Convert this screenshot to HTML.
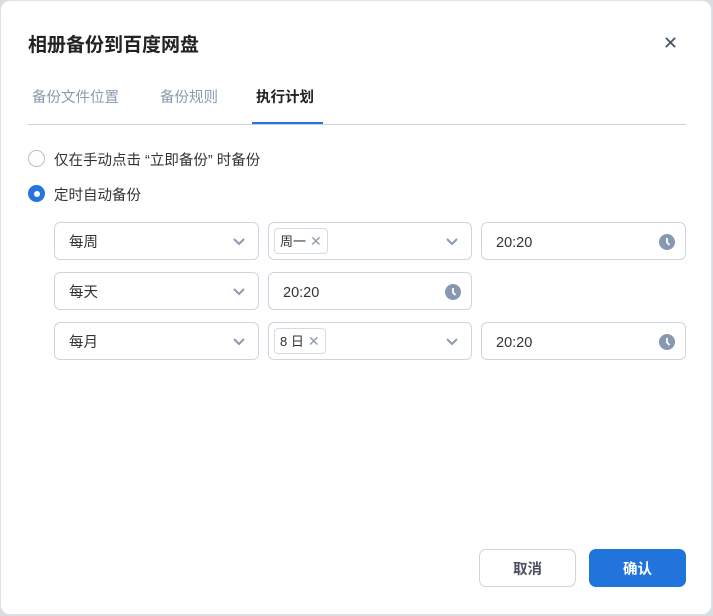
<!DOCTYPE html>
<html><head><meta charset="utf-8"><style>
*{box-sizing:border-box;margin:0;padding:0}
body{width:713px;height:616px;background:#d8dde4;font-family:"Liberation Sans","Noto Sans CJK SC",sans-serif;position:relative;overflow:hidden;color:#333}
.dlg{position:absolute;left:0;top:0;width:712px;height:615px;background:#fff;border:1px solid #dfe2e6;border-radius:10px}
.a{position:absolute}
.title{left:28px;top:30px;font-size:19px;font-weight:bold;color:#222}
.tab{top:86px;font-size:14.5px;color:#8a9bb0}
.sel{position:absolute;height:38px;border:1px solid #cdd5df;border-radius:6px;background:#fff}
.sel .t{position:absolute;left:14px;top:1px;line-height:38px;font-size:14.5px;color:#333}
.chev{position:absolute;right:13px;top:15px}
.clk{position:absolute;right:10px;top:11px;width:16px;height:16px}
.tag{position:absolute;left:5px;top:5px;height:26px;border:1px solid #d5dbe3;border-radius:4px;font-size:13px;padding:0 5px;line-height:25px;color:#333}
.tag span{color:#8a9bb0;margin-left:4px;font-size:14px}
.btn{position:absolute;top:549px;width:97px;height:38px;border-radius:7px;font-size:14.5px;font-weight:bold;display:flex;align-items:center;justify-content:center}
</style></head><body>
<div class="dlg"></div>
<div class="a title">相册备份到百度网盘</div>
<svg class="a" style="left:664px;top:36px" width="13" height="13" viewBox="0 0 14 14"><path d="M2 2L12 12M12 2L2 12" stroke="#4a5568" stroke-width="2"/></svg>
<div class="a tab" style="left:32px">备份文件位置</div>
<div class="a tab" style="left:160px">备份规则</div>
<div class="a tab" style="left:256px;color:#222;font-weight:bold">执行计划</div>
<div class="a" style="left:28px;top:124px;width:658px;height:1px;background:#c9d3e0"></div>
<div class="a" style="left:252px;top:122px;width:71px;height:2px;background:#2674dc"></div>
<div class="a" style="left:28px;top:150px;width:17px;height:17px;border:1px solid #b5c0ce;border-radius:50%"></div>
<div class="a" style="left:54px;top:149px;font-size:14.5px">仅在手动点击 “立即备份” 时备份</div>
<div class="a" style="left:28px;top:185px;width:17px;height:17px;border-radius:50%;background:#2674dc"><div style="position:absolute;left:5.5px;top:5.5px;width:6px;height:6px;border-radius:50%;background:#fff"></div></div>
<div class="a" style="left:54px;top:184px;font-size:14.5px">定时自动备份</div>

<div class="sel" style="left:54px;top:222px;width:205px"><div class="t">每周</div><svg class="chev" width="12" height="8"><path d="M1 1L6 6L11 1" stroke="#8a9bb0" stroke-width="2" fill="none"/></svg></div>
<div class="sel" style="left:268px;top:222px;width:204px"><div class="tag">周一<span>✕</span></div><svg class="chev" width="12" height="8"><path d="M1 1L6 6L11 1" stroke="#8a9bb0" stroke-width="2" fill="none"/></svg></div>
<div class="sel" style="left:481px;top:222px;width:205px"><div class="t">20:20</div><svg class="clk" viewBox="0 0 16 16"><circle cx="8" cy="8" r="8" fill="#8798b0"/><path d="M8 4V8.5L10.5 11" stroke="#fff" stroke-width="1.8" fill="none"/></svg></div>

<div class="sel" style="left:54px;top:272px;width:205px"><div class="t">每天</div><svg class="chev" width="12" height="8"><path d="M1 1L6 6L11 1" stroke="#8a9bb0" stroke-width="2" fill="none"/></svg></div>
<div class="sel" style="left:268px;top:272px;width:204px"><div class="t">20:20</div><svg class="clk" viewBox="0 0 16 16"><circle cx="8" cy="8" r="8" fill="#8798b0"/><path d="M8 4V8.5L10.5 11" stroke="#fff" stroke-width="1.8" fill="none"/></svg></div>

<div class="sel" style="left:54px;top:322px;width:205px"><div class="t">每月</div><svg class="chev" width="12" height="8"><path d="M1 1L6 6L11 1" stroke="#8a9bb0" stroke-width="2" fill="none"/></svg></div>
<div class="sel" style="left:268px;top:322px;width:204px"><div class="tag">8 日<span>✕</span></div><svg class="chev" width="12" height="8"><path d="M1 1L6 6L11 1" stroke="#8a9bb0" stroke-width="2" fill="none"/></svg></div>
<div class="sel" style="left:481px;top:322px;width:205px"><div class="t">20:20</div><svg class="clk" viewBox="0 0 16 16"><circle cx="8" cy="8" r="8" fill="#8798b0"/><path d="M8 4V8.5L10.5 11" stroke="#fff" stroke-width="1.8" fill="none"/></svg></div>

<div class="btn" style="left:479px;border:1px solid #cdd5df;color:#4a5060;background:#fff">取消</div>
<div class="btn" style="left:589px;background:#2274dd;color:#fff">确认</div>
</body></html>
